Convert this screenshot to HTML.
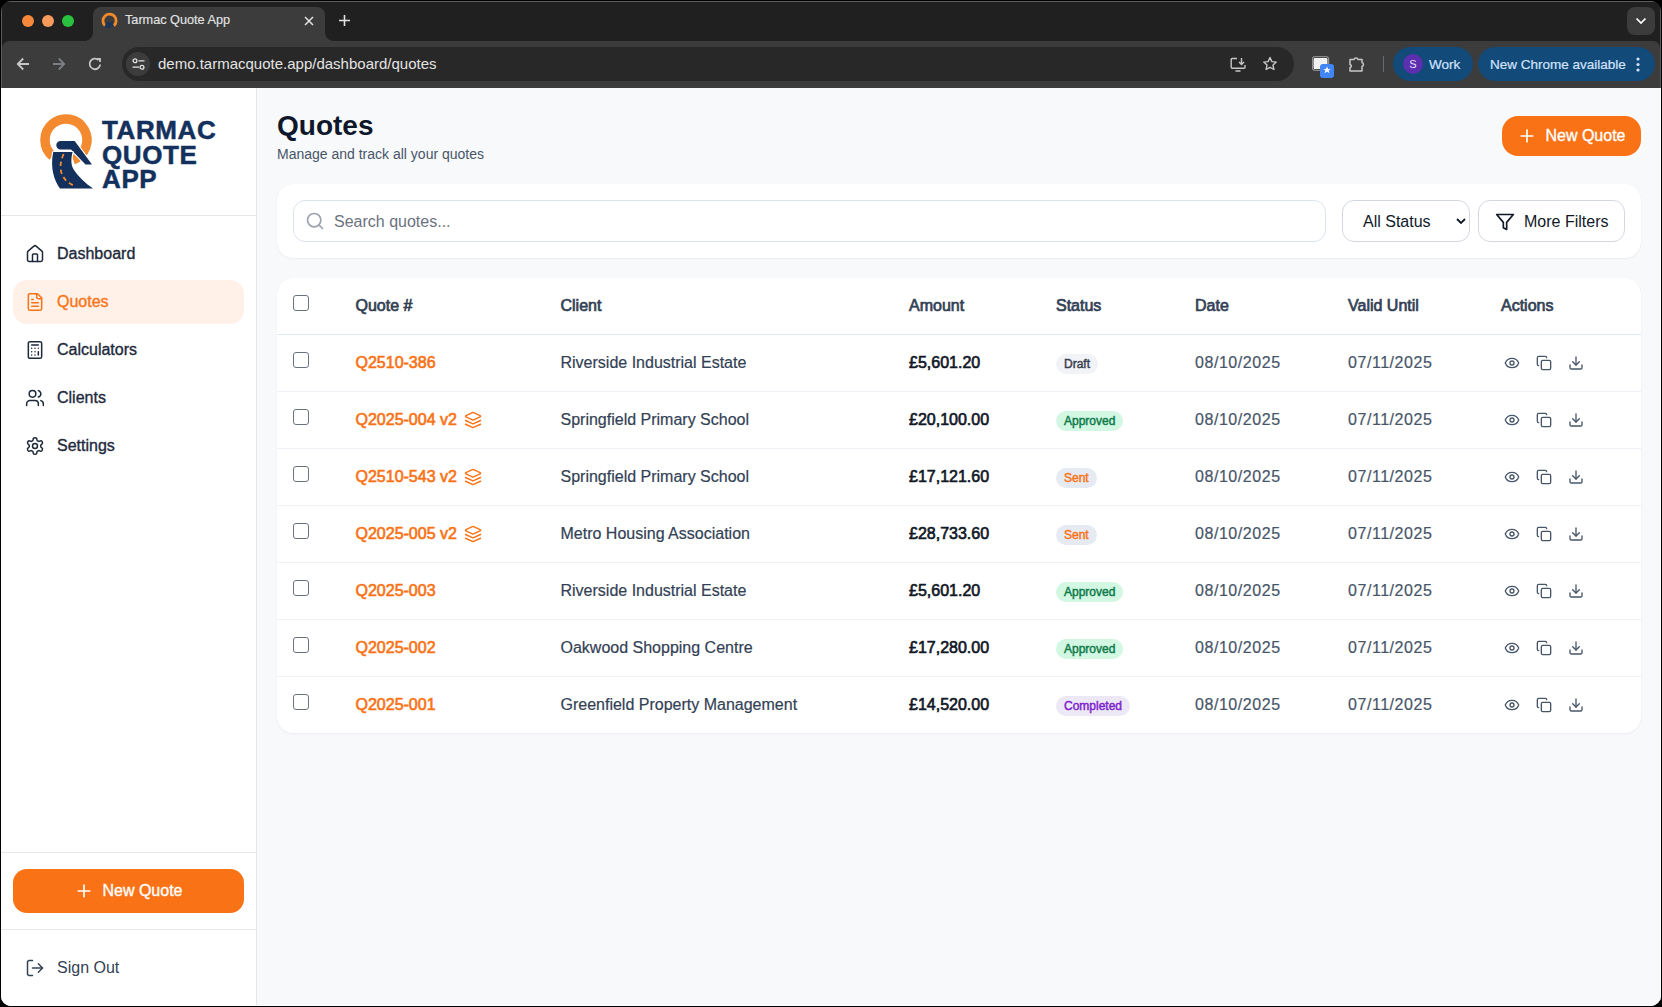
<!DOCTYPE html>
<html><head><meta charset="utf-8">
<style>
*{box-sizing:border-box;margin:0;padding:0}
html,body{width:1662px;height:1007px;overflow:hidden;background:#000;font-family:"Liberation Sans",sans-serif}
#win{position:absolute;left:0;top:0;width:1662px;height:1007px;clip-path:inset(1px round 10px);background:#202020}
#tabbar{position:absolute;left:0;top:0;width:1662px;height:41px;background:#202020}
.tl{position:absolute;top:15px;width:12px;height:12px;border-radius:50%}
#tab{position:absolute;left:93px;top:7px;width:232px;height:34px;background:#3c3c3c;border-radius:8px 8px 0 0}
#tab .t{position:absolute;left:32px;top:6px;font-size:12.7px;color:#e3e3e3;-webkit-text-stroke:0.15px #e3e3e3}
#toolbar{position:absolute;left:0;top:41px;width:1662px;height:47px;background:#3c3c3c;clip-path:inset(0 2px 0 2px round 7px 7px 0 0)}
#omni{position:absolute;left:122px;top:6px;width:1172px;height:34px;background:#282828;border-radius:17px}
#omni .u{position:absolute;left:36px;top:8px;font-size:15px;color:#e3e3e3}
#page{position:absolute;left:1px;top:88px;width:1661px;height:919px;background:#f8f9fb}
#side{position:absolute;left:0;top:0;width:256px;height:919px;background:#fff;border-right:1px solid #e5e7eb}
#main{position:absolute;left:256px;top:0;right:0;bottom:0}
#tabdd{position:absolute;left:1627px;top:7px;width:28px;height:28px;border-radius:8px;background:#3c3c3c}
#omni .site{position:absolute;left:4px;top:5px;width:24px;height:24px;border-radius:12px;background:#3c3c3c}
#work{position:absolute;left:1393px;top:6px;width:80px;height:34px;border-radius:17px;background:#124a7a}
#work .av{position:absolute;left:10px;top:7px;width:20px;height:20px;border-radius:50%;background:#5b2fae;color:#e8e0ff;font-size:11px;text-align:center;line-height:20px}
#work .wt{position:absolute;left:36px;top:10px;font-size:13.5px;color:#d3e3fd;-webkit-text-stroke:0.2px #d3e3fd}
#newc{position:absolute;left:1478px;top:6px;width:177px;height:34px;border-radius:17px;background:#124a7a}
#newc .nct{position:absolute;left:12px;top:10px;font-size:13.5px;color:#d3e3fd;-webkit-text-stroke:0.2px #d3e3fd}
.ni{position:absolute;left:24px;width:20px;height:20px}
.ni svg{display:block}
.nt{position:absolute;left:56px;height:24px;line-height:24px;font-size:16px;white-space:nowrap;-webkit-text-stroke:0.35px currentColor}
.lt{position:absolute;left:101px;height:24px;line-height:24px;font-size:26px;font-weight:bold;color:#13315c;letter-spacing:0.6px;-webkit-text-stroke:0.5px #13315c}
.btn{position:absolute;background:#f97316;border-radius:14px;color:#fff;display:flex;align-items:center;justify-content:center}
.btn .pl{display:inline-block;width:20px;height:20px;margin-right:8px}
.btn .pl svg{display:block}
.btn .bt{font-size:16px;-webkit-text-stroke:0.35px #fff;line-height:20px}
.title{position:absolute;height:32px;line-height:32px;font-size:28px;font-weight:bold;color:#0f172a}
.sub{position:absolute;height:20px;line-height:20px;font-size:14px;color:#475569}
.card{position:absolute;background:#fff;border-radius:16px;box-shadow:0 1px 2px rgba(15,23,42,0.05),0 0 1px rgba(15,23,42,0.06)}
.inp{position:absolute;border:1px solid #dbe2ec;border-radius:12px;background:#fff}
.ph{position:absolute;left:40px;top:9px;line-height:24px;font-size:16px;color:#6b7280}
.sel .st{position:absolute;left:20px;top:9px;line-height:24px;font-size:16px;color:#111827}
.cb{position:absolute;width:16px;height:16px;border:1.4px solid #6b7280;border-radius:3px;background:#fff}
.th{position:absolute;height:24px;line-height:24px;font-size:16px;color:#334155;-webkit-text-stroke:0.7px #334155;letter-spacing:0px;white-space:nowrap}
.qid{position:absolute;height:24px;line-height:24px;font-size:16px;color:#f97316;-webkit-text-stroke:0.65px #f97316;white-space:nowrap}
.td{position:absolute;height:24px;line-height:24px;font-size:16px;color:#334155;-webkit-text-stroke:0.2px currentColor;white-space:nowrap}
.dt{color:#475569;letter-spacing:0.55px}
.amt{position:absolute;height:24px;line-height:24px;font-size:16px;color:#111827;-webkit-text-stroke:0.65px #111827;white-space:nowrap}
.badge{position:absolute;height:20px;line-height:20px;font-size:12px;padding:0 8px;border-radius:10px;-webkit-text-stroke:0.45px currentColor;white-space:nowrap}
</style></head><body>
<div id="win">
 <div id="tabbar">
  <div class="tl" style="left:22px;background:#f5883a"></div>
  <div class="tl" style="left:42px;background:#f79b5c"></div>
  <div class="tl" style="left:62px;background:#29c23f"></div>
  <div style="position:absolute;left:85px;top:33px;width:8px;height:8px;background:radial-gradient(circle at 0 0, transparent 7.5px, #3c3c3c 8px)"></div>
  <div style="position:absolute;left:325px;top:33px;width:8px;height:8px;background:radial-gradient(circle at 100% 0, transparent 7.5px, #3c3c3c 8px)"></div>
  <div id="tab">
   <svg style="position:absolute;left:8px;top:5px" width="17" height="17" viewBox="0 0 17 17"><path d="M4 13.5A6.6 6.6 0 1 1 12.5 14" fill="none" stroke="#f38b2c" stroke-width="2.8"/><path d="M5.5 10H10.5L13.5 14.5H11.5L10 12.5V16H4.5C4 14 4.5 12 5.5 10Z" fill="#1d3557"/></svg>
   <div class="t">Tarmac Quote App</div>
   <svg style="position:absolute;left:211px;top:9px" width="10" height="10" viewBox="0 0 10 10"><path d="M1 1L9 9M9 1L1 9" stroke="#e3e3e3" stroke-width="1.5"/></svg>
  </div>
  <svg style="position:absolute;left:338px;top:14px" width="13" height="13" viewBox="0 0 13 13"><path d="M6.5 1V12M1 6.5H12" stroke="#e3e3e3" stroke-width="1.6"/></svg>
  <div id="tabdd"><svg width="12" height="8" viewBox="0 0 12 8" style="position:absolute;left:8px;top:10px"><path d="M1.5 1.5L6 6L10.5 1.5" fill="none" stroke="#fff" stroke-width="1.7"/></svg></div>
 </div>
 <div id="toolbar">
  <svg style="position:absolute;left:16px;top:16px" width="14" height="14" viewBox="0 0 14 14"><path d="M13 7H2M7.2 1.5L1.8 7L7.2 12.5" fill="none" stroke="#c7c7c7" stroke-width="1.8"/></svg>
  <svg style="position:absolute;left:52px;top:16px" width="14" height="14" viewBox="0 0 14 14"><path d="M1 7H12M6.8 1.5L12.2 7L6.8 12.5" fill="none" stroke="#7b7e84" stroke-width="1.8"/></svg>
  <svg style="position:absolute;left:88px;top:16px" width="14" height="14" viewBox="0 0 14 14"><path d="M12.2 7.5A5.3 5.3 0 1 1 10.5 3" fill="none" stroke="#c7c7c7" stroke-width="1.8"/><path d="M8.8 1.8H12V5" fill="none" stroke="#c7c7c7" stroke-width="1.8"/></svg>
  <div id="omni">
   <div class="site"><svg width="13" height="12" viewBox="0 0 13 12" style="position:absolute;left:6px;top:6px"><circle cx="3" cy="2.8" r="1.9" fill="none" stroke="#e3e3e3" stroke-width="1.3"/><path d="M6.5 2.8H12.5M0.5 9.2H7" stroke="#e3e3e3" stroke-width="1.3"/><circle cx="10" cy="9.2" r="1.9" fill="none" stroke="#e3e3e3" stroke-width="1.3"/></svg></div>
   <div class="u">demo.tarmacquote.app/dashboard/quotes</div>
   <svg style="position:absolute;left:1108px;top:10px" width="17" height="15" viewBox="0 0 17 15"><path d="M7 1.5H2.2A1 1 0 0 0 1.2 2.5V10.3A1 1 0 0 0 2.2 11.3H14A1 1 0 0 0 15 10.3V8" fill="none" stroke="#c7c7c7" stroke-width="1.4"/><path d="M5.5 14H10.5" stroke="#c7c7c7" stroke-width="1.6"/><path d="M11.5 1V7.5M9 5L11.5 7.5L14 5" fill="none" stroke="#c7c7c7" stroke-width="1.4"/></svg>
   <svg style="position:absolute;left:1140px;top:9px" width="16" height="16" viewBox="0 0 16 16"><path d="M8 1.5L9.9 5.6L14.3 6.1L11 9.1L11.9 13.5L8 11.3L4.1 13.5L5 9.1L1.7 6.1L6.1 5.6Z" fill="none" stroke="#c7c7c7" stroke-width="1.4" stroke-linejoin="round"/></svg>
  </div>
  <svg style="position:absolute;left:1312px;top:15px" width="24" height="23" viewBox="0 0 24 23"><rect x="1" y="1.5" width="15" height="12" rx="1.5" fill="#f1f1f1" stroke="#2a2a2a" stroke-width="1"/><rect x="0.3" y="0.8" width="16.4" height="13.4" rx="2" fill="none" stroke="#c7c7c7" stroke-width="0.8"/><rect x="8" y="8" width="14" height="14" rx="3" fill="#4285f4"/><path d="M15 10.5L16.1 13H18.7L16.6 14.6L17.4 17.2L15 15.6L12.6 17.2L13.4 14.6L11.3 13H13.9Z" fill="#fff"/></svg>
  <svg style="position:absolute;left:1347px;top:14px" width="20" height="18" viewBox="0 0 20 18"><path d="M3 4.5H7A2.1 2.1 0 0 1 11 4.5H15V7.5A2.1 2.1 0 0 1 15 11.5V16H3V12.5A1.4 1.4 0 0 0 3 9.7Z" fill="none" stroke="#c7c7c7" stroke-width="1.5" stroke-linejoin="round"/></svg>
  <div style="position:absolute;left:1383px;top:15px;width:1px;height:16px;background:#5f6b7a"></div>
  <div id="work"><div class="av">S</div><div class="wt">Work</div></div>
  <div id="newc"><div class="nct">New Chrome available</div><svg style="position:absolute;left:158px;top:10px" width="4" height="15" viewBox="0 0 4 15"><circle cx="2" cy="2" r="1.6" fill="#d3e3fd"/><circle cx="2" cy="7.5" r="1.6" fill="#d3e3fd"/><circle cx="2" cy="13" r="1.6" fill="#d3e3fd"/></svg></div>
 </div>
 <div id="page">
  <div id="side">
<svg style="position:absolute;left:34px;top:20px" width="65" height="85" viewBox="35 108 65 85">
<path d="M52.5 156.1 A21 21 0 1 1 73.2 159.7" fill="none" stroke="#f38a2f" stroke-width="9.5"/>
<g fill="#13315c" stroke="#fff" stroke-width="2.2" paint-order="stroke" stroke-linejoin="round">
<path d="M60.5 141 H74.7 L92 164.5 H85.5 L71 149.4 H60.5 A4.2 4.2 0 0 1 60.5 141 Z"/>
<path d="M53.2 152 H72.6 C71 158 70.5 165 74 170 C78 176 85 183 93 188.5 H60 C54 180 50 168 53.2 152 Z"/>
</g>
<path d="M63.6 154 C61 160 59.5 166 61.5 173 C63.5 179 68 183 73.5 185.5" fill="none" stroke="#f38a2f" stroke-width="1.8" stroke-dasharray="4.5 3.5"/>
</svg>
<div class="lt" style="top:30px">TARMAC</div><div class="lt" style="top:54.5px">QUOTE</div><div class="lt" style="top:79px">APP</div>
<div style="position:absolute;left:0;top:127px;width:256px;height:1px;background:#e5e7eb"></div>
<div class="ni" style="top:156px"><svg width="20" height="20" viewBox="0 0 24 24" fill="none" stroke="#1e293b" stroke-width="1.8" stroke-linecap="round" stroke-linejoin="round"><path d="M15 21v-8a1 1 0 0 0-1-1h-4a1 1 0 0 0-1 1v8"/><path d="M3 10a2 2 0 0 1 .709-1.528l7-5.999a2 2 0 0 1 2.582 0l7 5.999A2 2 0 0 1 21 10v9a2 2 0 0 1-2 2H5a2 2 0 0 1-2-2z"/></svg></div><div class="nt" style="top:154px;color:#1e293b">Dashboard</div><div style="position:absolute;left:12px;top:192px;width:231px;height:44px;border-radius:14px;background:#fff1e8"></div><div class="ni" style="top:204px"><svg width="20" height="20" viewBox="0 0 24 24" fill="none" stroke="#f97316" stroke-width="1.8" stroke-linecap="round" stroke-linejoin="round"><path d="M15 2H6a2 2 0 0 0-2 2v16a2 2 0 0 0 2 2h12a2 2 0 0 0 2-2V7Z"/><path d="M14 2v4a2 2 0 0 0 2 2h4"/><path d="M10 9H8"/><path d="M16 13H8"/><path d="M16 17H8"/></svg></div><div class="nt" style="top:202px;color:#f97316">Quotes</div><div class="ni" style="top:252px"><svg width="20" height="20" viewBox="0 0 24 24" fill="none" stroke="#1e293b" stroke-width="1.8" stroke-linecap="round" stroke-linejoin="round"><rect width="16" height="20" x="4" y="2" rx="2"/><line x1="8" x2="16" y1="6" y2="6"/><line x1="16" x2="16" y1="14" y2="18"/><path d="M16 10h.01"/><path d="M12 10h.01"/><path d="M8 10h.01"/><path d="M12 14h.01"/><path d="M8 14h.01"/><path d="M12 18h.01"/><path d="M8 18h.01"/></svg></div><div class="nt" style="top:250px;color:#1e293b">Calculators</div><div class="ni" style="top:300px"><svg width="20" height="20" viewBox="0 0 24 24" fill="none" stroke="#1e293b" stroke-width="1.8" stroke-linecap="round" stroke-linejoin="round"><path d="M16 21v-2a4 4 0 0 0-4-4H6a4 4 0 0 0-4 4v2"/><circle cx="9" cy="7" r="4"/><path d="M22 21v-2a4 4 0 0 0-3-3.87"/><path d="M16 3.13a4 4 0 0 1 0 7.75"/></svg></div><div class="nt" style="top:298px;color:#1e293b">Clients</div><div class="ni" style="top:348px"><svg width="20" height="20" viewBox="0 0 24 24" fill="none" stroke="#1e293b" stroke-width="1.8" stroke-linecap="round" stroke-linejoin="round"><path d="M12.22 2h-.44a2 2 0 0 0-2 2v.18a2 2 0 0 1-1 1.73l-.43.25a2 2 0 0 1-2 0l-.15-.08a2 2 0 0 0-2.73.73l-.22.38a2 2 0 0 0 .73 2.73l.15.1a2 2 0 0 1 1 1.72v.51a2 2 0 0 1-1 1.74l-.15.09a2 2 0 0 0-.73 2.73l.22.38a2 2 0 0 0 2.73.73l.15-.08a2 2 0 0 1 2 0l.43.25a2 2 0 0 1 1 1.73V20a2 2 0 0 0 2 2h.44a2 2 0 0 0 2-2v-.18a2 2 0 0 1 1-1.73l.43-.25a2 2 0 0 1 2 0l.15.08a2 2 0 0 0 2.73-.73l.22-.39a2 2 0 0 0-.73-2.73l-.15-.08a2 2 0 0 1-1-1.74v-.5a2 2 0 0 1 1-1.74l.15-.09a2 2 0 0 0 .73-2.73l-.22-.38a2 2 0 0 0-2.73-.73l-.15.08a2 2 0 0 1-2 0l-.43-.25a2 2 0 0 1-1-1.73V4a2 2 0 0 0-2-2z"/><circle cx="12" cy="12" r="3"/></svg></div><div class="nt" style="top:346px;color:#1e293b">Settings</div>
<div style="position:absolute;left:0;top:764px;width:256px;height:1px;background:#e5e7eb"></div>
<div class="btn" style="left:12px;top:781px;width:231px;height:44px"><span class="pl"><svg width="20" height="20" viewBox="0 0 24 24" fill="none" stroke="#fff" stroke-width="2" stroke-linecap="round" stroke-linejoin="round"><path d="M5 12h14"/><path d="M12 5v14"/></svg></span><span class="bt">New Quote</span></div>
<div style="position:absolute;left:0;top:841px;width:256px;height:1px;background:#e5e7eb"></div>
<div class="ni" style="top:870px"><svg width="20" height="20" viewBox="0 0 24 24" fill="none" stroke="#334155" stroke-width="1.8" stroke-linecap="round" stroke-linejoin="round"><path d="M9 21H5a2 2 0 0 1-2-2V5a2 2 0 0 1 2-2h4"/><polyline points="16 17 21 12 16 7"/><line x1="21" x2="9" y1="12" y2="12"/></svg></div><div class="nt" style="top:868px;color:#334155;-webkit-text-stroke:0">Sign Out</div>
</div>
  <div id="main">
<div class="title" style="left:20px;top:21.5px">Quotes</div>
<div class="sub" style="left:20px;top:56px">Manage and track all your quotes</div>
<div class="btn" style="left:1245px;top:28px;width:139px;height:40px;border-radius:16px"><span class="pl"><svg width="20" height="20" viewBox="0 0 24 24" fill="none" stroke="#fff" stroke-width="2" stroke-linecap="round" stroke-linejoin="round" style="display:block"><path d="M5 12h14"/><path d="M12 5v14"/></svg></span><span class="bt">New Quote</span></div>
<div class="card" style="left:20px;top:96px;width:1364px;height:74px">
 <div class="inp" style="left:16px;top:16px;width:1033px;height:42px">
  <div style="position:absolute;left:11px;top:10px"><svg width="20" height="20" viewBox="0 0 24 24" fill="none" stroke="#9ca3af" stroke-width="2" stroke-linecap="round" stroke-linejoin="round" style="display:block"><circle cx="11" cy="11" r="8"/><path d="m21 21-4.3-4.3"/></svg></div>
  <div class="ph">Search quotes...</div>
 </div>
 <div class="inp sel" style="left:1065px;top:16px;width:128px;height:42px;border-color:#d3d8e0"><span class="st">All Status</span><svg width="10" height="7" viewBox="0 0 10 7" style="position:absolute;left:113px;top:17px"><path d="M1 1L5 5L9 1" fill="none" stroke="#111827" stroke-width="1.8"/></svg></div>
 <div class="inp sel" style="left:1201px;top:16px;width:147px;height:42px;border-color:#d3d8e0"><div style="position:absolute;left:16px;top:11px"><svg width="20" height="20" viewBox="0 0 24 24" fill="none" stroke="#111827" stroke-width="2" stroke-linecap="round" stroke-linejoin="round" style="display:block"><polygon points="22 3 2 3 10 12.46 10 19 14 21 14 12.46 22 3"/></svg></div><span class="st" style="left:45px">More Filters</span></div>
</div>
<div class="card" style="left:20px;top:190px;width:1364px;height:455px">
<div class="cb" style="left:16px;top:17px"></div><div class="th" style="left:78.5px;top:16px">Quote #</div><div class="th" style="left:283.5px;top:16px">Client</div><div class="th" style="left:632px;top:16px">Amount</div><div class="th" style="left:779px;top:16px">Status</div><div class="th" style="left:918px;top:16px">Date</div><div class="th" style="left:1071px;top:16px">Valid Until</div><div class="th" style="left:1224px;top:16px">Actions</div><div style="position:absolute;left:0;top:56px;width:100%;height:1px;background:#e2e8f0"></div><div class="cb" style="left:16px;top:74.0px"></div><div class="qid" style="left:78.5px;top:72.5px">Q2510-386</div><div class="td" style="left:283.5px;top:72.5px">Riverside Industrial Estate</div><div class="amt" style="left:632px;top:72.5px">£5,601.20</div><div class="badge" style="left:779px;top:76.0px;background:#f1f3f6;color:#374151">Draft</div><div class="td dt" style="left:918px;top:72.5px">08/10/2025</div><div class="td dt" style="left:1071px;top:72.5px">07/11/2025</div><div style="position:absolute;left:1227px;top:76.5px"><svg width="16" height="16" viewBox="0 0 24 24" fill="none" stroke="#475569" stroke-width="2" stroke-linecap="round" stroke-linejoin="round" style="display:block"><path d="M2.062 12.348a1 1 0 0 1 0-.696 10.75 10.75 0 0 1 19.876 0 1 1 0 0 1 0 .696 10.75 10.75 0 0 1-19.876 0"/><circle cx="12" cy="12" r="3"/></svg></div><div style="position:absolute;left:1259px;top:76.5px"><svg width="16" height="16" viewBox="0 0 24 24" fill="none" stroke="#475569" stroke-width="2" stroke-linecap="round" stroke-linejoin="round" style="display:block"><rect width="14" height="14" x="8" y="8" rx="2" ry="2"/><path d="M4 16c-1.1 0-2-.9-2-2V4c0-1.1.9-2 2-2h10c1.1 0 2 .9 2 2"/></svg></div><div style="position:absolute;left:1291px;top:76.5px"><svg width="16" height="16" viewBox="0 0 24 24" fill="none" stroke="#475569" stroke-width="2" stroke-linecap="round" stroke-linejoin="round" style="display:block"><path d="M21 15v4a2 2 0 0 1-2 2H5a2 2 0 0 1-2-2v-4"/><polyline points="7 10 12 15 17 10"/><line x1="12" x2="12" y1="15" y2="3"/></svg></div><div style="position:absolute;left:0;top:113px;width:100%;height:1px;background:#eef1f5"></div><div class="cb" style="left:16px;top:131.0px"></div><div class="qid" style="left:78.5px;top:129.5px">Q2025-004 v2</div><div style="position:absolute;left:187px;top:132.5px"><svg width="18" height="18" viewBox="0 0 24 24" fill="none" stroke="#f97316" stroke-width="2" stroke-linecap="round" stroke-linejoin="round" style="display:block"><path d="m12.83 2.18a2 2 0 0 0-1.66 0L2.6 6.08a1 1 0 0 0 0 1.83l8.58 3.91a2 2 0 0 0 1.66 0l8.58-3.9a1 1 0 0 0 0-1.83Z"/><path d="m22 17.65-9.17 4.16a2 2 0 0 1-1.66 0L2 17.65"/><path d="m22 12.65-9.17 4.16a2 2 0 0 1-1.66 0L2 12.65"/></svg></div><div class="td" style="left:283.5px;top:129.5px">Springfield Primary School</div><div class="amt" style="left:632px;top:129.5px">£20,100.00</div><div class="badge" style="left:779px;top:133.0px;background:#d2f7e3;color:#0f7a4a">Approved</div><div class="td dt" style="left:918px;top:129.5px">08/10/2025</div><div class="td dt" style="left:1071px;top:129.5px">07/11/2025</div><div style="position:absolute;left:1227px;top:133.5px"><svg width="16" height="16" viewBox="0 0 24 24" fill="none" stroke="#475569" stroke-width="2" stroke-linecap="round" stroke-linejoin="round" style="display:block"><path d="M2.062 12.348a1 1 0 0 1 0-.696 10.75 10.75 0 0 1 19.876 0 1 1 0 0 1 0 .696 10.75 10.75 0 0 1-19.876 0"/><circle cx="12" cy="12" r="3"/></svg></div><div style="position:absolute;left:1259px;top:133.5px"><svg width="16" height="16" viewBox="0 0 24 24" fill="none" stroke="#475569" stroke-width="2" stroke-linecap="round" stroke-linejoin="round" style="display:block"><rect width="14" height="14" x="8" y="8" rx="2" ry="2"/><path d="M4 16c-1.1 0-2-.9-2-2V4c0-1.1.9-2 2-2h10c1.1 0 2 .9 2 2"/></svg></div><div style="position:absolute;left:1291px;top:133.5px"><svg width="16" height="16" viewBox="0 0 24 24" fill="none" stroke="#475569" stroke-width="2" stroke-linecap="round" stroke-linejoin="round" style="display:block"><path d="M21 15v4a2 2 0 0 1-2 2H5a2 2 0 0 1-2-2v-4"/><polyline points="7 10 12 15 17 10"/><line x1="12" x2="12" y1="15" y2="3"/></svg></div><div style="position:absolute;left:0;top:170px;width:100%;height:1px;background:#eef1f5"></div><div class="cb" style="left:16px;top:188.0px"></div><div class="qid" style="left:78.5px;top:186.5px">Q2510-543 v2</div><div style="position:absolute;left:187px;top:189.5px"><svg width="18" height="18" viewBox="0 0 24 24" fill="none" stroke="#f97316" stroke-width="2" stroke-linecap="round" stroke-linejoin="round" style="display:block"><path d="m12.83 2.18a2 2 0 0 0-1.66 0L2.6 6.08a1 1 0 0 0 0 1.83l8.58 3.91a2 2 0 0 0 1.66 0l8.58-3.9a1 1 0 0 0 0-1.83Z"/><path d="m22 17.65-9.17 4.16a2 2 0 0 1-1.66 0L2 17.65"/><path d="m22 12.65-9.17 4.16a2 2 0 0 1-1.66 0L2 12.65"/></svg></div><div class="td" style="left:283.5px;top:186.5px">Springfield Primary School</div><div class="amt" style="left:632px;top:186.5px">£17,121.60</div><div class="badge" style="left:779px;top:190.0px;background:#e6eaf2;color:#f97316">Sent</div><div class="td dt" style="left:918px;top:186.5px">08/10/2025</div><div class="td dt" style="left:1071px;top:186.5px">07/11/2025</div><div style="position:absolute;left:1227px;top:190.5px"><svg width="16" height="16" viewBox="0 0 24 24" fill="none" stroke="#475569" stroke-width="2" stroke-linecap="round" stroke-linejoin="round" style="display:block"><path d="M2.062 12.348a1 1 0 0 1 0-.696 10.75 10.75 0 0 1 19.876 0 1 1 0 0 1 0 .696 10.75 10.75 0 0 1-19.876 0"/><circle cx="12" cy="12" r="3"/></svg></div><div style="position:absolute;left:1259px;top:190.5px"><svg width="16" height="16" viewBox="0 0 24 24" fill="none" stroke="#475569" stroke-width="2" stroke-linecap="round" stroke-linejoin="round" style="display:block"><rect width="14" height="14" x="8" y="8" rx="2" ry="2"/><path d="M4 16c-1.1 0-2-.9-2-2V4c0-1.1.9-2 2-2h10c1.1 0 2 .9 2 2"/></svg></div><div style="position:absolute;left:1291px;top:190.5px"><svg width="16" height="16" viewBox="0 0 24 24" fill="none" stroke="#475569" stroke-width="2" stroke-linecap="round" stroke-linejoin="round" style="display:block"><path d="M21 15v4a2 2 0 0 1-2 2H5a2 2 0 0 1-2-2v-4"/><polyline points="7 10 12 15 17 10"/><line x1="12" x2="12" y1="15" y2="3"/></svg></div><div style="position:absolute;left:0;top:227px;width:100%;height:1px;background:#eef1f5"></div><div class="cb" style="left:16px;top:245.0px"></div><div class="qid" style="left:78.5px;top:243.5px">Q2025-005 v2</div><div style="position:absolute;left:187px;top:246.5px"><svg width="18" height="18" viewBox="0 0 24 24" fill="none" stroke="#f97316" stroke-width="2" stroke-linecap="round" stroke-linejoin="round" style="display:block"><path d="m12.83 2.18a2 2 0 0 0-1.66 0L2.6 6.08a1 1 0 0 0 0 1.83l8.58 3.91a2 2 0 0 0 1.66 0l8.58-3.9a1 1 0 0 0 0-1.83Z"/><path d="m22 17.65-9.17 4.16a2 2 0 0 1-1.66 0L2 17.65"/><path d="m22 12.65-9.17 4.16a2 2 0 0 1-1.66 0L2 12.65"/></svg></div><div class="td" style="left:283.5px;top:243.5px">Metro Housing Association</div><div class="amt" style="left:632px;top:243.5px">£28,733.60</div><div class="badge" style="left:779px;top:247.0px;background:#e6eaf2;color:#f97316">Sent</div><div class="td dt" style="left:918px;top:243.5px">08/10/2025</div><div class="td dt" style="left:1071px;top:243.5px">07/11/2025</div><div style="position:absolute;left:1227px;top:247.5px"><svg width="16" height="16" viewBox="0 0 24 24" fill="none" stroke="#475569" stroke-width="2" stroke-linecap="round" stroke-linejoin="round" style="display:block"><path d="M2.062 12.348a1 1 0 0 1 0-.696 10.75 10.75 0 0 1 19.876 0 1 1 0 0 1 0 .696 10.75 10.75 0 0 1-19.876 0"/><circle cx="12" cy="12" r="3"/></svg></div><div style="position:absolute;left:1259px;top:247.5px"><svg width="16" height="16" viewBox="0 0 24 24" fill="none" stroke="#475569" stroke-width="2" stroke-linecap="round" stroke-linejoin="round" style="display:block"><rect width="14" height="14" x="8" y="8" rx="2" ry="2"/><path d="M4 16c-1.1 0-2-.9-2-2V4c0-1.1.9-2 2-2h10c1.1 0 2 .9 2 2"/></svg></div><div style="position:absolute;left:1291px;top:247.5px"><svg width="16" height="16" viewBox="0 0 24 24" fill="none" stroke="#475569" stroke-width="2" stroke-linecap="round" stroke-linejoin="round" style="display:block"><path d="M21 15v4a2 2 0 0 1-2 2H5a2 2 0 0 1-2-2v-4"/><polyline points="7 10 12 15 17 10"/><line x1="12" x2="12" y1="15" y2="3"/></svg></div><div style="position:absolute;left:0;top:284px;width:100%;height:1px;background:#eef1f5"></div><div class="cb" style="left:16px;top:302.0px"></div><div class="qid" style="left:78.5px;top:300.5px">Q2025-003</div><div class="td" style="left:283.5px;top:300.5px">Riverside Industrial Estate</div><div class="amt" style="left:632px;top:300.5px">£5,601.20</div><div class="badge" style="left:779px;top:304.0px;background:#d2f7e3;color:#0f7a4a">Approved</div><div class="td dt" style="left:918px;top:300.5px">08/10/2025</div><div class="td dt" style="left:1071px;top:300.5px">07/11/2025</div><div style="position:absolute;left:1227px;top:304.5px"><svg width="16" height="16" viewBox="0 0 24 24" fill="none" stroke="#475569" stroke-width="2" stroke-linecap="round" stroke-linejoin="round" style="display:block"><path d="M2.062 12.348a1 1 0 0 1 0-.696 10.75 10.75 0 0 1 19.876 0 1 1 0 0 1 0 .696 10.75 10.75 0 0 1-19.876 0"/><circle cx="12" cy="12" r="3"/></svg></div><div style="position:absolute;left:1259px;top:304.5px"><svg width="16" height="16" viewBox="0 0 24 24" fill="none" stroke="#475569" stroke-width="2" stroke-linecap="round" stroke-linejoin="round" style="display:block"><rect width="14" height="14" x="8" y="8" rx="2" ry="2"/><path d="M4 16c-1.1 0-2-.9-2-2V4c0-1.1.9-2 2-2h10c1.1 0 2 .9 2 2"/></svg></div><div style="position:absolute;left:1291px;top:304.5px"><svg width="16" height="16" viewBox="0 0 24 24" fill="none" stroke="#475569" stroke-width="2" stroke-linecap="round" stroke-linejoin="round" style="display:block"><path d="M21 15v4a2 2 0 0 1-2 2H5a2 2 0 0 1-2-2v-4"/><polyline points="7 10 12 15 17 10"/><line x1="12" x2="12" y1="15" y2="3"/></svg></div><div style="position:absolute;left:0;top:341px;width:100%;height:1px;background:#eef1f5"></div><div class="cb" style="left:16px;top:359.0px"></div><div class="qid" style="left:78.5px;top:357.5px">Q2025-002</div><div class="td" style="left:283.5px;top:357.5px">Oakwood Shopping Centre</div><div class="amt" style="left:632px;top:357.5px">£17,280.00</div><div class="badge" style="left:779px;top:361.0px;background:#d2f7e3;color:#0f7a4a">Approved</div><div class="td dt" style="left:918px;top:357.5px">08/10/2025</div><div class="td dt" style="left:1071px;top:357.5px">07/11/2025</div><div style="position:absolute;left:1227px;top:361.5px"><svg width="16" height="16" viewBox="0 0 24 24" fill="none" stroke="#475569" stroke-width="2" stroke-linecap="round" stroke-linejoin="round" style="display:block"><path d="M2.062 12.348a1 1 0 0 1 0-.696 10.75 10.75 0 0 1 19.876 0 1 1 0 0 1 0 .696 10.75 10.75 0 0 1-19.876 0"/><circle cx="12" cy="12" r="3"/></svg></div><div style="position:absolute;left:1259px;top:361.5px"><svg width="16" height="16" viewBox="0 0 24 24" fill="none" stroke="#475569" stroke-width="2" stroke-linecap="round" stroke-linejoin="round" style="display:block"><rect width="14" height="14" x="8" y="8" rx="2" ry="2"/><path d="M4 16c-1.1 0-2-.9-2-2V4c0-1.1.9-2 2-2h10c1.1 0 2 .9 2 2"/></svg></div><div style="position:absolute;left:1291px;top:361.5px"><svg width="16" height="16" viewBox="0 0 24 24" fill="none" stroke="#475569" stroke-width="2" stroke-linecap="round" stroke-linejoin="round" style="display:block"><path d="M21 15v4a2 2 0 0 1-2 2H5a2 2 0 0 1-2-2v-4"/><polyline points="7 10 12 15 17 10"/><line x1="12" x2="12" y1="15" y2="3"/></svg></div><div style="position:absolute;left:0;top:398px;width:100%;height:1px;background:#eef1f5"></div><div class="cb" style="left:16px;top:416.0px"></div><div class="qid" style="left:78.5px;top:414.5px">Q2025-001</div><div class="td" style="left:283.5px;top:414.5px">Greenfield Property Management</div><div class="amt" style="left:632px;top:414.5px">£14,520.00</div><div class="badge" style="left:779px;top:418.0px;background:#ece8f6;color:#7e22ce">Completed</div><div class="td dt" style="left:918px;top:414.5px">08/10/2025</div><div class="td dt" style="left:1071px;top:414.5px">07/11/2025</div><div style="position:absolute;left:1227px;top:418.5px"><svg width="16" height="16" viewBox="0 0 24 24" fill="none" stroke="#475569" stroke-width="2" stroke-linecap="round" stroke-linejoin="round" style="display:block"><path d="M2.062 12.348a1 1 0 0 1 0-.696 10.75 10.75 0 0 1 19.876 0 1 1 0 0 1 0 .696 10.75 10.75 0 0 1-19.876 0"/><circle cx="12" cy="12" r="3"/></svg></div><div style="position:absolute;left:1259px;top:418.5px"><svg width="16" height="16" viewBox="0 0 24 24" fill="none" stroke="#475569" stroke-width="2" stroke-linecap="round" stroke-linejoin="round" style="display:block"><rect width="14" height="14" x="8" y="8" rx="2" ry="2"/><path d="M4 16c-1.1 0-2-.9-2-2V4c0-1.1.9-2 2-2h10c1.1 0 2 .9 2 2"/></svg></div><div style="position:absolute;left:1291px;top:418.5px"><svg width="16" height="16" viewBox="0 0 24 24" fill="none" stroke="#475569" stroke-width="2" stroke-linecap="round" stroke-linejoin="round" style="display:block"><path d="M21 15v4a2 2 0 0 1-2 2H5a2 2 0 0 1-2-2v-4"/><polyline points="7 10 12 15 17 10"/><line x1="12" x2="12" y1="15" y2="3"/></svg></div>
</div>
</div>
 </div>

 <div style="position:absolute;left:0;top:1px;width:1662px;height:1px;background:#5c5c5c"></div>
 <div style="position:absolute;left:1px;top:1px;width:1px;height:87px;background:#5c5c5c"></div>
 <div style="position:absolute;left:1660px;top:1px;width:1px;height:87px;background:#5c5c5c"></div>
 <div style="position:absolute;left:1660px;top:88px;width:1px;height:919px;background:#fff"></div>
 <div style="position:absolute;left:0;top:1005px;width:1662px;height:1px;background:#fff"></div>
</div>
</body></html>
